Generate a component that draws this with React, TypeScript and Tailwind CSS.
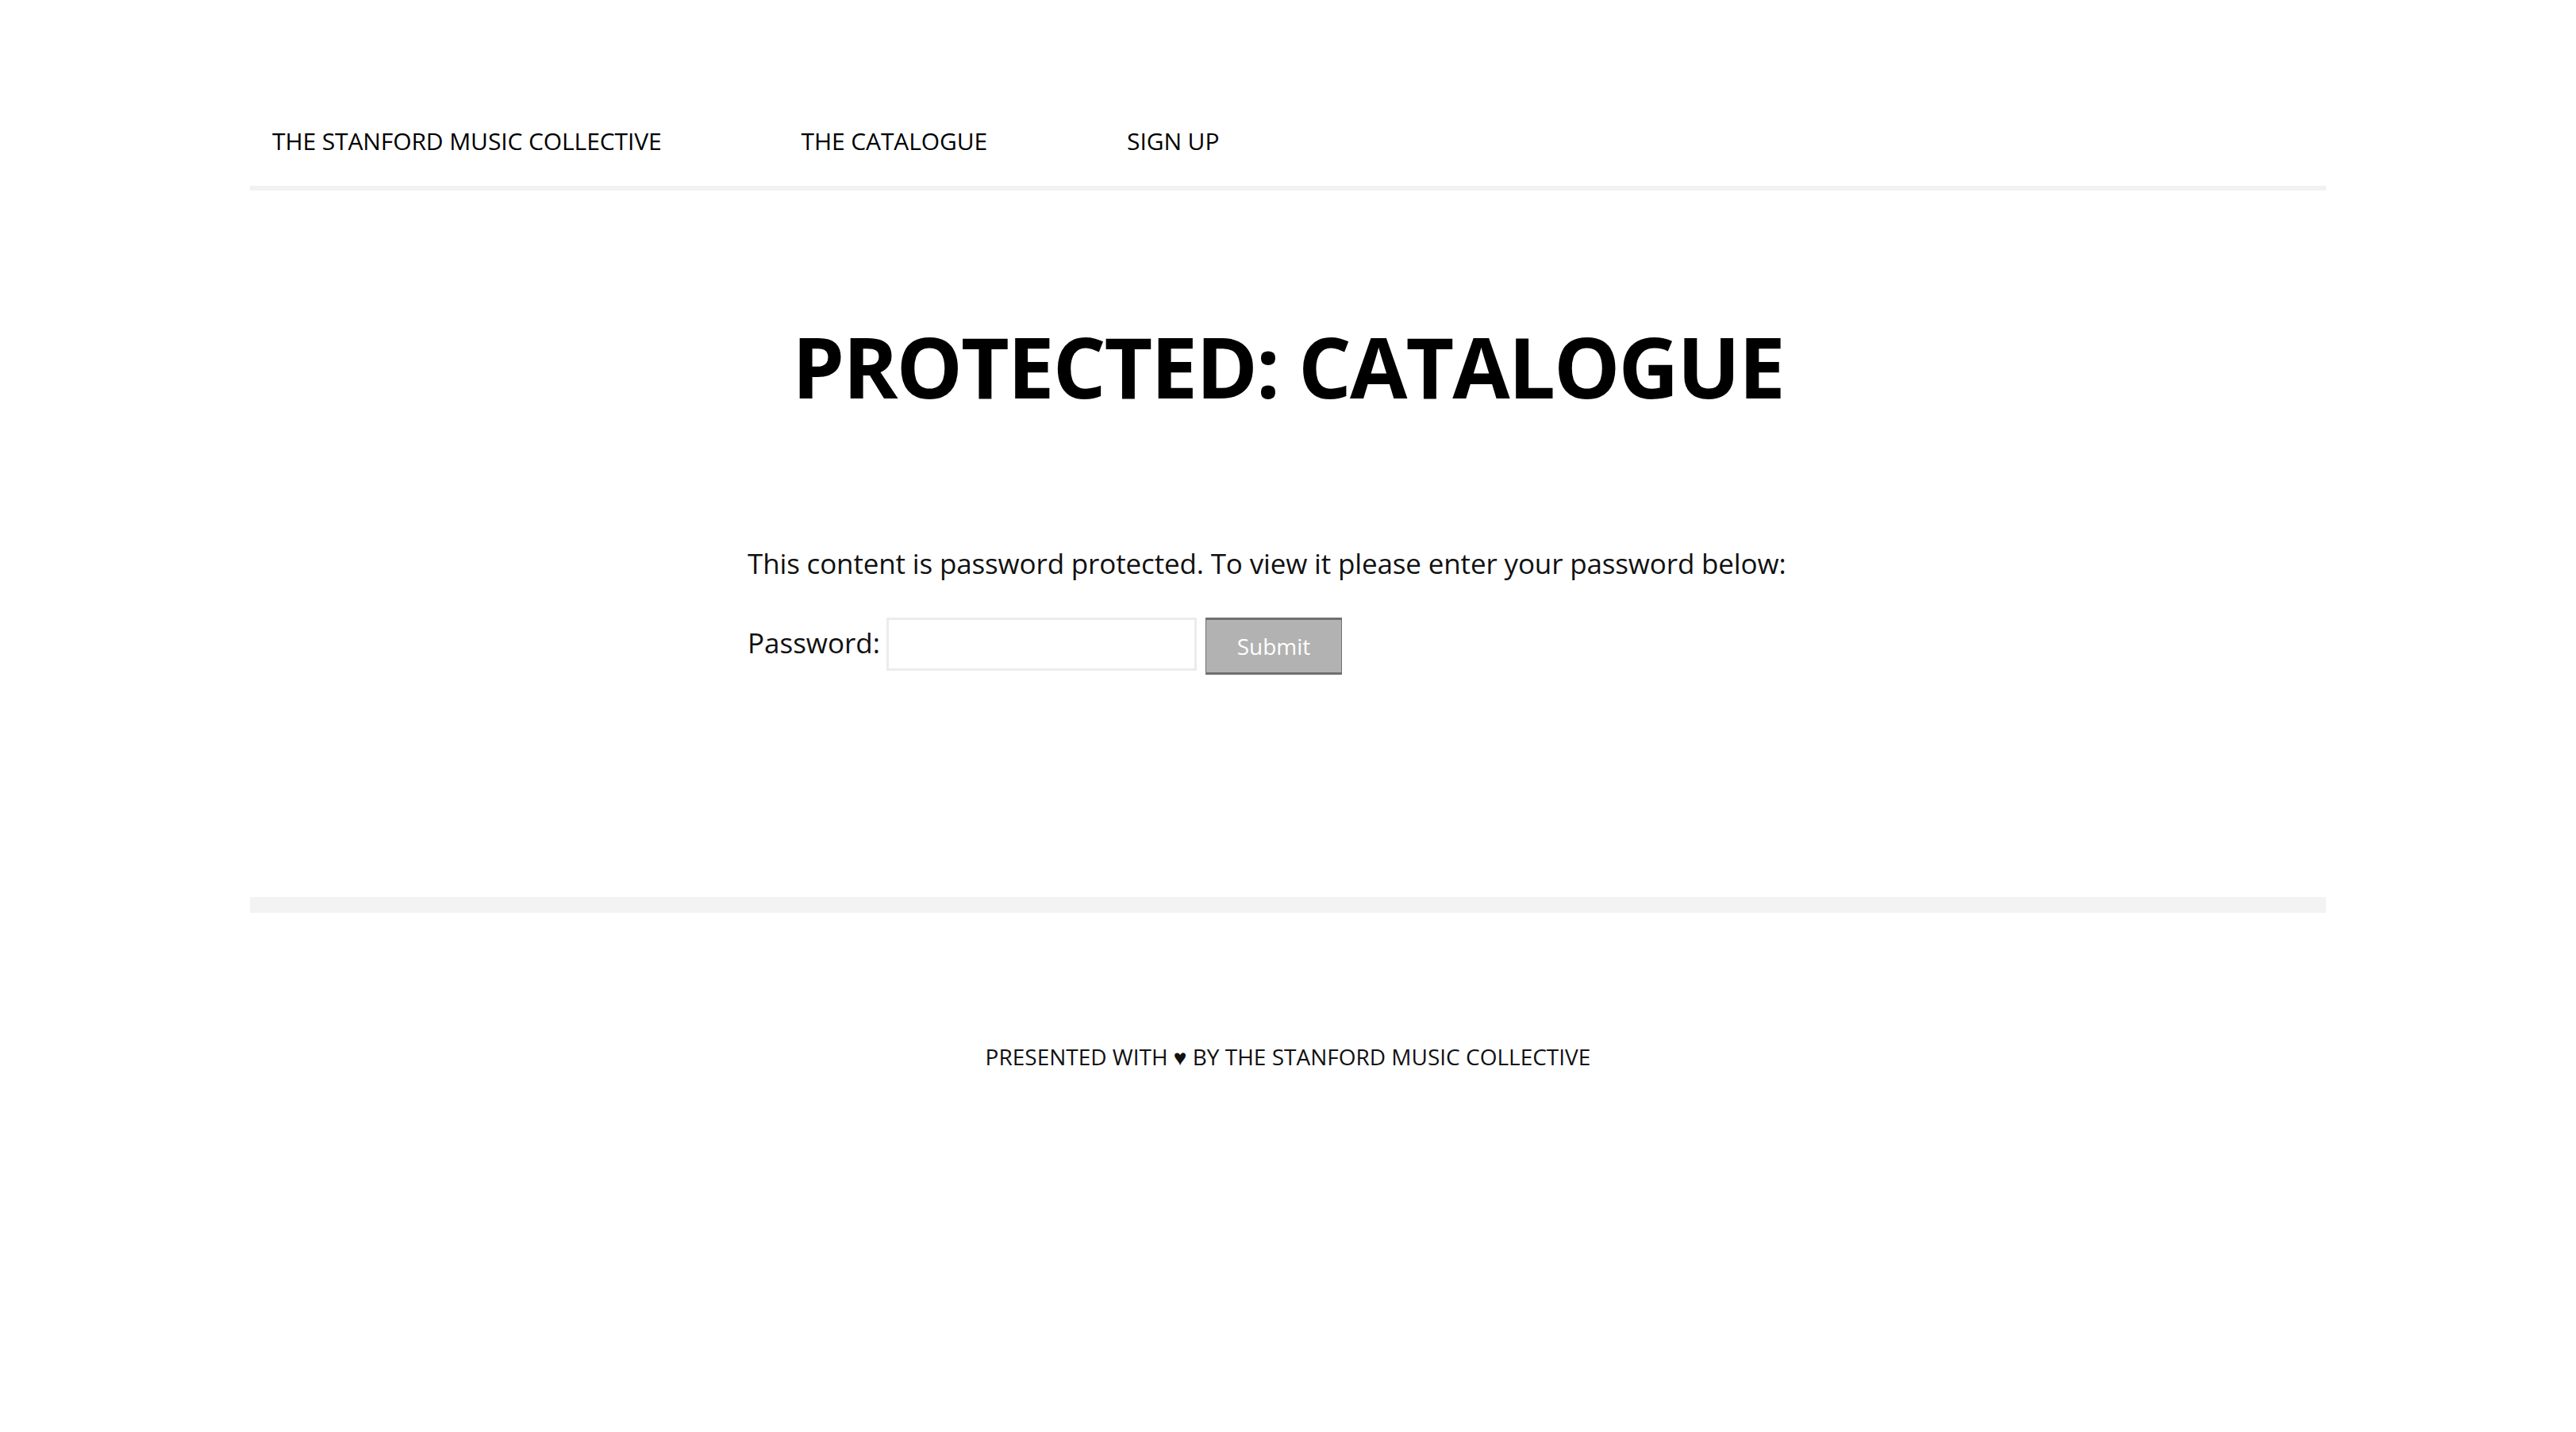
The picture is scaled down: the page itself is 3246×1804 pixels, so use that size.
const navItems = ["THE STANFORD MUSIC COLLECTIVE", "THE CATALOGUE", "SIGN UP"];

export default function App() {
  return (
    <div className="min-h-[1804px] bg-white text-black font-['Open_Sans',sans-serif]">
      <div className="w-[2616px] mx-auto">
        {/* top nav */}
        <nav className="pt-[163px] pb-[41px] pl-[28px] border-b-[6px] border-[#f2f2f2]">
          <ul className="flex gap-[176px] text-[30px] leading-none tracking-[-0.1px]">
            {navItems.map((item) => (
              <li key={item}>
                <a href="#">{item}</a>
              </li>
            ))}
          </ul>
        </nav>

        <main>
          <h1 className="mt-[169px] text-center text-[105px] leading-none font-bold tracking-[-2px]">
            PROTECTED: CATALOGUE
          </h1>

          <form className="mt-[178px] w-[1362px] mx-auto text-[35px] text-[#111]">
            <p className="leading-none whitespace-nowrap tracking-[-0.15px]">
              This content is password protected. To view it please enter your password below:
            </p>
            <div className="mt-[51px] flex items-start gap-[8px]">
              <label className="pt-[14px] leading-none">Password:</label>
              <div className="flex gap-[11px]">
                <input
                  type="password"
                  className="w-[391px] h-[67px] border-[3px] border-[#ececec] outline-none"
                />
                <button
                  type="button"
                  className="w-[172px] h-[72px] bg-[#b2b2b2] border border-y-[3px] border-[#707070] text-white text-[28px]"
                >
                  Submit
                </button>
              </div>
            </div>
          </form>
        </main>

        <div className="mt-[280px] h-[20px] bg-[#f3f3f3]" />

        <footer className="pt-[167px] text-center text-[28px] leading-none text-[#111]">
          PRESENTED WITH ♥ BY THE STANFORD MUSIC COLLECTIVE
        </footer>
      </div>
    </div>
  );
}
